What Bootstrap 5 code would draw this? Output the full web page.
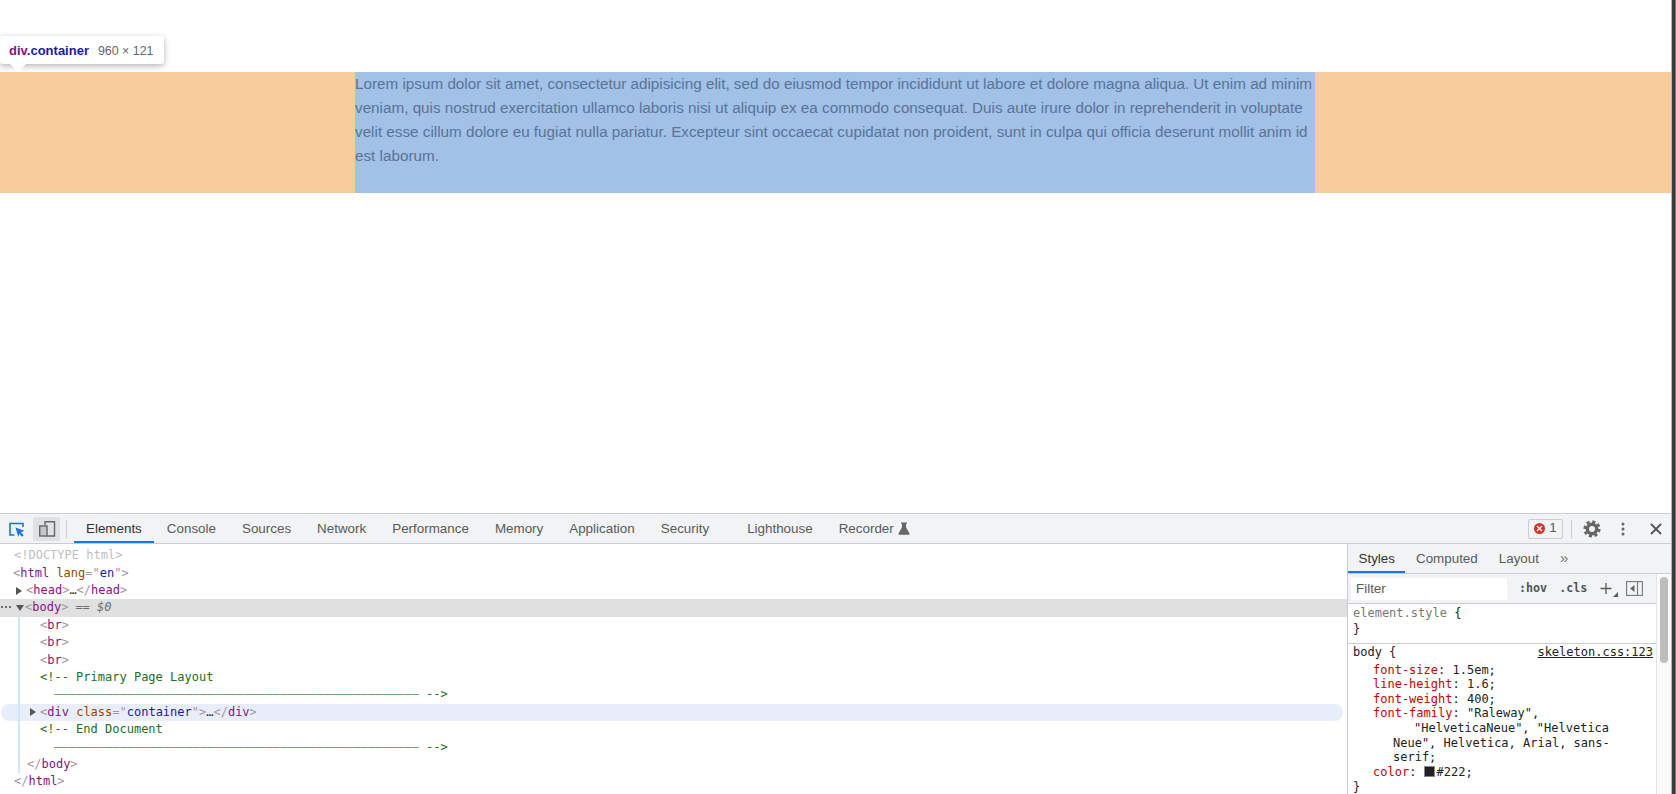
<!DOCTYPE html>
<html lang="en"><head><meta charset="utf-8">
<link href="https://cdn.jsdelivr.net/npm/bootstrap@5.3.0/dist/css/bootstrap.min.css" rel="stylesheet">
<style>
html,body{height:794px;overflow:hidden;background:#fff}
body{font-family:"Liberation Sans",Arial,sans-serif;color:#222}
.pg-wrap{width:1671px;flex:none}
.edge-strip{flex:1;background:linear-gradient(90deg,#b4b4b4 0 30%,#3a3a3a 30% 85%,#777 85%)}
.pg-area{height:513px;position:relative}
.pg-spacer{height:72px}
.hl-band{background:#f6cd9b;height:121px;padding-left:355px}
.hl-box{background:#a1c1e7;width:960px;height:121px;color:#5a7397;font-size:15.25px;line-height:24px}
.hl-tip{position:absolute;left:0;top:36px;height:28px;background:#fff;border-radius:3px;box-shadow:0 2px 6px rgba(0,0,0,.3);font-size:13px;padding:0 11px 0 9px;line-height:29px;white-space:nowrap}
.hl-tip::after{content:"";position:absolute;left:10px;top:28px;border:8px solid transparent;border-top-color:#fff;border-bottom:0}
.tip-tag{color:#881280;font-weight:700}.tip-cls{color:#1a1aa6;font-weight:700}.tip-dim{color:#666;margin-left:9px;font-size:12.4px}
.dt-root{height:281px;border-top:1px solid #cacdd1;font-size:13.4px;color:#333}
.dt-bar{height:30px;background:#f1f3f4;border-bottom:1px solid #cacdd1}
.dt-tab{height:29px;line-height:29px;color:#5a5a5a;white-space:nowrap;padding:0 13px}
.dt-tab.dt-on{color:#333;border-bottom:2px solid #1a73e8}
.tab-first{padding:0 12px}
.tab-gap{margin-right:12px}
.tab-start{margin-left:7px}
.tab-side{padding:0 10.5px}
.dt-main{height:250px}
.dt-left{width:1347px;font-family:"DejaVu Sans Mono",monospace;font-size:12px;position:relative;flex:none;padding-top:3.3px}
.dt-right{flex:1;border-left:1px solid #cacdd1;min-width:0}
.ln{height:17.4px;line-height:17.4px;white-space:pre}
.ln-sel{background:#e0e0e0}
.ln-hov{background:#e8eef9;border-radius:8px;margin:0 4px 0 1px}
.i-13{padding-left:13px}.i-14{padding-left:14px}.i-16{padding-left:16px}.i-27{padding-left:27px}.i-29{padding-left:29px}.i-40{padding-left:40px}.i-54{padding-left:54px}
.g-t{color:#881280}.g-b{color:#a894a6}.g-a{color:#994500}.g-v{color:#1a1aa6}.g-c{color:#236e25}.g-dash{color:#5f9e62;letter-spacing:.07px}.g-d{color:#c0c0c0}.g-eq{color:#6d6d6d;margin-left:7px}
.guide{position:absolute;left:18px;top:73px;height:156px;width:2px;background:#d2e3fc}
.arrow-r{display:inline-block;width:0;height:0;border-left:6px solid #555;border-top:4.5px solid transparent;border-bottom:4.5px solid transparent;margin-right:4px;vertical-align:-.5px}
.arrow-d{display:inline-block;width:0;height:0;border-top:6px solid #555;border-left:4.5px solid transparent;border-right:4.5px solid transparent;margin-right:1px;vertical-align:0}
.dots-sel{margin-right:3px;vertical-align:2px}
.sub-bar{height:30px;background:#f1f3f4;border-bottom:1px solid #cacdd1}
.more-tab{color:#777;font-size:15px;line-height:27px}
.flt-bar{height:30px;background:#f1f3f4;border-bottom:1px solid #cacdd1}
.flt-in{background:#fff;width:156px;height:22px;margin-left:3px;color:#5a5a5a;padding-left:5px;line-height:22px}
.st-body{width:308px;flex:none}
.st-track{flex:1;background:#fafafa;border-left:1px solid #e6e6e6;position:relative}
.st-thumb{position:absolute;left:3px;top:3px;width:8px;height:86px;background:#bdbdbd;border-radius:4px}
.mono-txt{font-family:"DejaVu Sans Mono",monospace;font-size:12px;color:#222}
.fl-btn{font-family:"DejaVu Sans Mono",monospace;font-size:11.7px;font-weight:700;color:#555;margin-left:12px}
.st-a{height:16.3px;line-height:16.3px;padding-left:5px;white-space:pre}
.st-first{padding-top:1px;padding-bottom:5px;border-bottom:1px solid #cacdd1}
.st-sel{height:16px;line-height:16px;padding:0 3px 0 5px}
.src-link{text-decoration:underline}
.st-rules{padding-top:3px}
.st-r{height:14.63px;line-height:14.63px;white-space:pre}
.r-a{padding-left:25px}.r-b{padding-left:66px}.r-c{padding-left:45px}.r-z{padding-left:5px}
.rule-rd{color:#c80000}
.sel-dim{color:#777}
.swatch{display:inline-block;width:11px;height:11px;background:#222;border:1px solid #888;margin-right:2px;vertical-align:-1px}
.vsep{width:1px;height:18px;background:#cacdd1;flex:none}
.err-btn{border:1px solid #cacdd1;border-radius:2px;height:20px;width:35px;background:#f1f3f4;color:#5a5a5a}
.err-dot{width:11px;height:11px;border-radius:50%;background:#d93025;flex:none}
.dev-btn{width:27px;height:24px;background:#dfe1e5;border-radius:2px}
.ic-a{margin-left:8px;flex:none}.ic-b{margin-left:7px;flex:none}.sep-a{margin-left:6px}
.top-end{margin-left:auto}
.end-a{margin-left:8px}.end-b{margin-left:11px}.end-c{margin-left:15px}.end-d{margin-left:20px;margin-right:9px}
.ic-plus{margin-left:12px;flex:none}.ic-dock{margin-left:7px;flex:none}
</style></head><body class="d-flex">
<div class="pg-wrap">
<div class="pg-area">
<div class="pg-spacer"></div>
<div class="hl-band"><div class="hl-box">Lorem ipsum dolor sit amet, consectetur adipisicing elit, sed do eiusmod tempor incididunt ut labore et dolore magna aliqua. Ut enim ad minim veniam, quis nostrud exercitation ullamco laboris nisi ut aliquip ex ea commodo consequat. Duis aute irure dolor in reprehenderit in voluptate velit esse cillum dolore eu fugiat nulla pariatur. Excepteur sint occaecat cupidatat non proident, sunt in culpa qui officia deserunt mollit anim id est laborum.</div></div>
<div class="hl-tip"><span class="tip-tag">div</span><span class="tip-cls">.container</span><span class="tip-dim">960 × 121</span></div>
</div>
<div class="dt-root">
<div class="dt-bar d-flex align-items-center">
<svg class="ic-a" width="18" height="18" viewBox="0 0 18 18" fill="none"><path d="M6.500 15H2V3.500h13V7" stroke="#1a73e8" stroke-width="1.600"/><path d="M7.500 7.500l9 3.300-3.600 1.500 2.800 2.900-1.600 1.500-2.800-2.900L10.300 17z" fill="#1a73e8"/></svg>
<div class="dev-btn ic-b d-flex align-items-center justify-content-center"><svg width="18" height="18" viewBox="0 0 18 18" fill="none"><path d="M7 5V1.800h9.500V16H9" stroke="#666" stroke-width="1.400"/><rect x="1.700" y="6" width="7.300" height="10" stroke="#666" stroke-width="1.400" fill="#c4c6ca"/></svg></div>
<div class="vsep sep-a"></div>
<div class="d-flex align-self-start tab-start">
<div class="dt-tab tab-first dt-on">Elements</div><div class="dt-tab">Console</div><div class="dt-tab">Sources</div><div class="dt-tab">Network</div><div class="dt-tab">Performance</div><div class="dt-tab">Memory</div><div class="dt-tab">Application</div><div class="dt-tab tab-gap">Security</div><div class="dt-tab">Lighthouse</div><div class="dt-tab d-flex align-items-center gap-1">Recorder <svg width="12" height="13" viewBox="0 0 12 13" fill="#666"><path d="M3 .5h6v1.300H8v3.400l3.500 6.300c.3.600-.1 1.200-.8 1.200H1.300c-.7 0-1.100-.6-.8-1.200L4 5.200V1.800H3z"/></svg></div>
</div>
<div class="top-end d-flex align-items-center">
<div class="err-btn d-flex align-items-center justify-content-center gap-1"><span class="err-dot d-flex align-items-center justify-content-center"><svg width="7" height="7" viewBox="0 0 7 7" stroke="#fff" stroke-width="1.400"><path d="M1 1l5 5M6 1L1 6"/></svg></span><span>1</span></div>
<div class="vsep end-a"></div>
<svg class="end-b" width="18" height="18" viewBox="0 0 18 18" fill="none"><circle cx="9" cy="9" r="4.700" stroke="#666" stroke-width="3.400"/><circle cx="9" cy="9" r="7.300" stroke="#666" stroke-width="2.600" stroke-dasharray="3.100 2.630"/></svg>
<svg class="end-c" width="14" height="16" viewBox="0 0 14 16" fill="#666"><circle cx="7" cy="3" r="1.500"/><circle cx="7" cy="8" r="1.500"/><circle cx="7" cy="13" r="1.500"/></svg>
<svg class="end-d" width="12" height="12" viewBox="0 0 12 12" stroke="#555" stroke-width="1.800"><path d="M1 1l10 10M11 1L1 11"/></svg>
</div>
</div>
<div class="dt-main d-flex">
<div class="dt-left">
<div class="guide"></div>
<div class="ln i-14"><span class="g-d">&lt;!DOCTYPE html&gt;</span></div>
<div class="ln i-13"><span class="g-b">&lt;</span><span class="g-t">html</span> <span class="g-a">lang</span><span class="g-b">="</span><span class="g-v">en</span><span class="g-b">"&gt;</span></div>
<div class="ln i-16"><i class="arrow-r"></i><span class="g-b">&lt;</span><span class="g-t">head</span><span class="g-b">&gt;</span>…<span class="g-b">&lt;/</span><span class="g-t">head</span><span class="g-b">&gt;</span></div>
<div class="ln ln-sel"><svg class="dots-sel" width="13" height="4" viewBox="0 0 13 4" fill="#555"><circle cx="2" cy="2" r="1.100"/><circle cx="6" cy="2" r="1.100"/><circle cx="10" cy="2" r="1.100"/></svg><i class="arrow-d"></i><span class="g-b">&lt;</span><span class="g-t">body</span><span class="g-b">&gt;</span><span class="g-eq">== <i>$0</i></span></div>
<div class="ln i-40"><span class="g-b">&lt;</span><span class="g-t">br</span><span class="g-b">&gt;</span></div>
<div class="ln i-40"><span class="g-b">&lt;</span><span class="g-t">br</span><span class="g-b">&gt;</span></div>
<div class="ln i-40"><span class="g-b">&lt;</span><span class="g-t">br</span><span class="g-b">&gt;</span></div>
<div class="ln i-40 g-c">&lt;!-- Primary Page Layout</div>
<div class="ln i-54 g-c"><span class="g-dash">——————————————————————————————————————————————————</span> --&gt;</div>
<div class="ln ln-hov i-29"><i class="arrow-r"></i><span class="g-b">&lt;</span><span class="g-t">div</span> <span class="g-a">class</span><span class="g-b">="</span><span class="g-v">container</span><span class="g-b">"&gt;</span>…<span class="g-b">&lt;/</span><span class="g-t">div</span><span class="g-b">&gt;</span></div>
<div class="ln i-40 g-c">&lt;!-- End Document</div>
<div class="ln i-54 g-c"><span class="g-dash">——————————————————————————————————————————————————</span> --&gt;</div>
<div class="ln i-27"><span class="g-b">&lt;/</span><span class="g-t">body</span><span class="g-b">&gt;</span></div>
<div class="ln i-14"><span class="g-b">&lt;/</span><span class="g-t">html</span><span class="g-b">&gt;</span></div>
</div>
<div class="dt-right">
<div class="sub-bar d-flex">
<div class="dt-tab tab-side dt-on">Styles</div><div class="dt-tab tab-side">Computed</div><div class="dt-tab tab-side">Layout</div><div class="dt-tab tab-side more-tab">»</div>
</div>
<div class="d-flex">
<div class="st-body">
<div class="flt-bar d-flex align-items-center">
<div class="flt-in">Filter</div>
<span class="fl-btn">:hov</span><span class="fl-btn">.cls</span>
<svg class="ic-plus" width="20" height="18" viewBox="0 0 20 18" fill="none"><path d="M7 3v11M1.500 8.500h11" stroke="#5a5a5a" stroke-width="1.300"/><path d="M19 12v5h-5z" fill="#5a5a5a"/></svg>
<svg class="ic-dock" width="17" height="15" viewBox="0 0 17 15" fill="none"><rect x=".6" y=".6" width="15.800" height="13.800" stroke="#777" stroke-width="1.100"/><path d="M11.500 1v13" stroke="#777" stroke-width="1.100"/><path d="M8.500 4v7L4 7.500z" fill="#666"/></svg>
</div>
<div class="mono-txt st-first">
<div class="st-a"><span class="sel-dim">element.style</span> {</div>
<div class="st-a">}</div>
</div>
<div class="mono-txt st-sel d-flex justify-content-between"><span>body {</span><span class="src-link">skeleton.css:123</span></div>
<div class="mono-txt st-rules">
<div class="st-r r-a"><span class="rule-rd">font-size</span>: 1.5em;</div>
<div class="st-r r-a"><span class="rule-rd">line-height</span>: 1.6;</div>
<div class="st-r r-a"><span class="rule-rd">font-weight</span>: 400;</div>
<div class="st-r r-a"><span class="rule-rd">font-family</span>: "Raleway",</div>
<div class="st-r r-b">"HelveticaNeue", "Helvetica</div>
<div class="st-r r-c">Neue", Helvetica, Arial, sans-</div>
<div class="st-r r-c">serif;</div>
<div class="st-r r-a"><span class="rule-rd">color</span>: <span class="swatch"></span>#222;</div>
<div class="st-r r-z">}</div>
</div>
</div>
<div class="st-track"><div class="st-thumb"></div></div>
</div>
</div>
</div>
</div>
</div>
<div class="edge-strip"></div>
<script src="https://cdn.jsdelivr.net/npm/bootstrap@5.3.0/dist/js/bootstrap.bundle.min.js"></script>
</body></html>
